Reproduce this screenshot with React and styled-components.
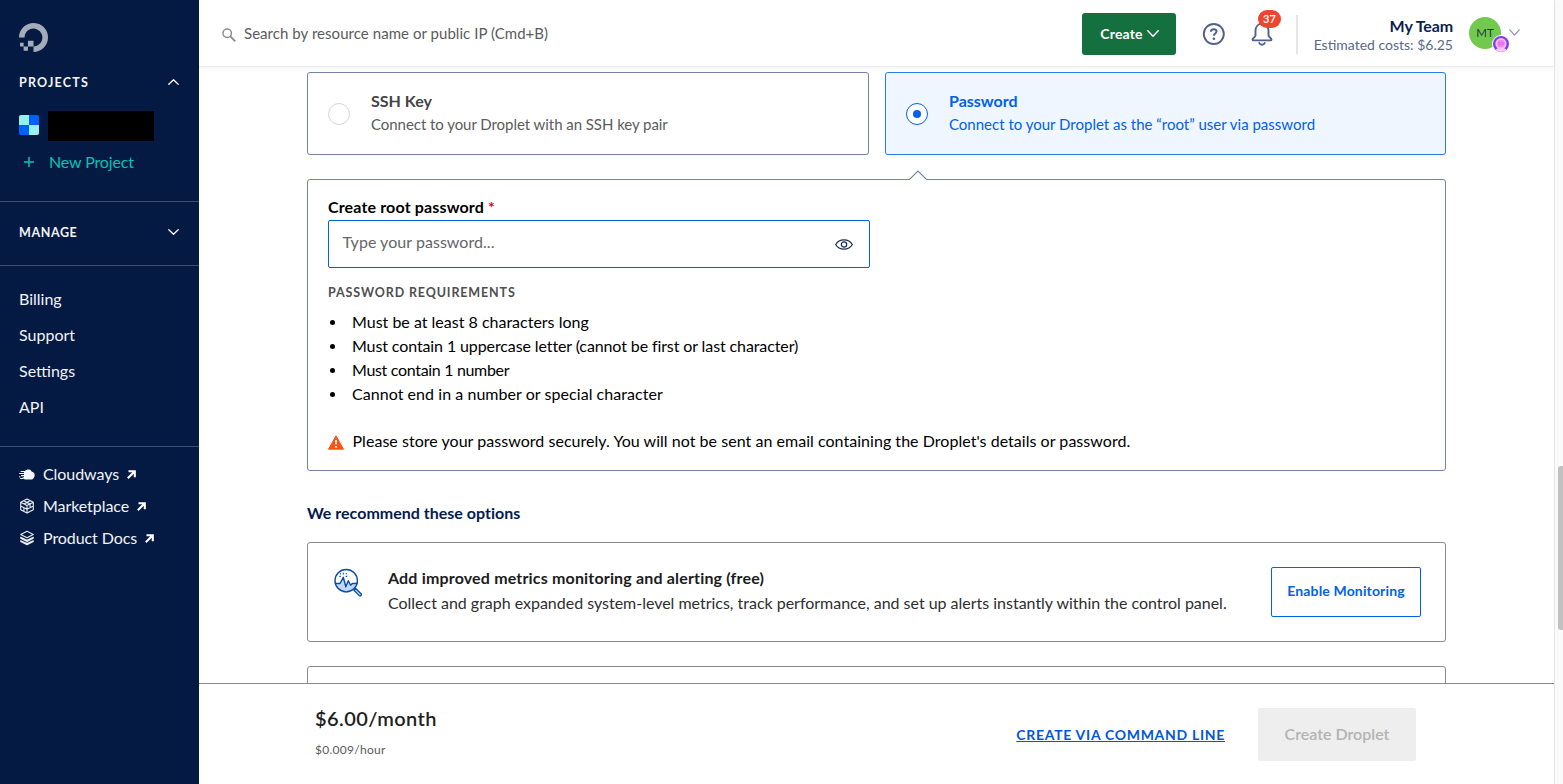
import React from 'react';
import styled, { createGlobalStyle } from 'styled-components';

const GlobalStyle = createGlobalStyle`
  *, *::before, *::after { box-sizing: border-box; }
  body {
    margin: 0;
    font-family: Lato, "Liberation Sans", sans-serif;
    font-size: 16px;
    overflow: hidden;
    background: #fff;
  }
  button { font-family: inherit; cursor: pointer; }
  svg { display: block; flex: none; }
  h1, h2, p, ul { margin: 0; padding: 0; }
  a { color: inherit; text-decoration: none; }
`;

const Shell = styled.div`
  display: flex;
  width: 100%;
  height: 784px;
  overflow: hidden;
`;

/* Sidebar */

const Sidebar = styled.nav`
  display: flex;
  flex-direction: column;
  flex: none;
  width: 199px;
  background: #051a42;
  color: #f1f3f7;
`;

const SideSection = styled.section`
  padding: ${(p) => p.$top}px 19px ${(p) => p.$bottom}px;
  border-bottom: ${(p) => (p.$last ? 'none' : '1px solid #3e4c6d')};
`;

const SectionToggle = styled.h2`
  display: flex;
  justify-content: space-between;
  align-items: center;
  padding-right: 1px;
  font-size: 12.5px;
  font-weight: 700;
  line-height: 20px;
  letter-spacing: ${(p) => p.$tracking}px;
  margin-top: ${(p) => p.$gap || 0}px;
  svg { margin-top: -2px; }
`;

const ProjectRow = styled.div`
  display: flex;
  align-items: center;
  gap: 9px;
  height: 30px;
  margin-top: 18px;
`;

const ProjectMark = styled.div`
  width: 20px;
  height: 20px;
  margin-top: -2px;
  border-radius: 2px;
  background: conic-gradient(#0061ff 25%, #97f0ea 0 50%, #0061ff 0 75%, #97f0ea 0);
`;

const ProjectName = styled.div`
  width: 106px;
  height: 30px;
  background: #000;
`;

const NewProject = styled.a`
  display: flex;
  align-items: center;
  gap: 15px;
  margin-top: 11px;
  padding-left: 5px;
  line-height: 20px;
  letter-spacing: -0.13px;
  color: #00c3b6;
`;

const SideLink = styled.a`
  display: block;
  line-height: 36px;
`;

const ExternalLink = styled.a`
  display: flex;
  align-items: center;
  line-height: 32px;
  letter-spacing: -0.07px;
  svg:first-child { margin-right: 8px; }
  svg:last-child { margin: 1px 0 0 8px; }
`;

/* Header */

const Main = styled.main`
  display: flex;
  flex-direction: column;
  flex: 1;
  min-width: 0;
`;

const Header = styled.header`
  display: flex;
  align-items: flex-start;
  flex: none;
  height: 67px;
  padding-left: 23px;
  border-bottom: 1px solid #ebebeb;
  box-shadow: 0 2px 4px rgba(0, 0, 0, 0.04);
  position: relative;
`;

const Search = styled.label`
  display: flex;
  align-items: center;
  flex: 1;
  gap: 8px;
  margin-top: 22px;
  height: 22px;
  svg { margin-top: 3px; }
`;

const SearchText = styled.span`
  font-size: 15px;
  line-height: 22px;
  letter-spacing: 0.05px;
  color: #5b5b5b;
`;

const CreateButton = styled.button`
  display: flex;
  align-items: center;
  justify-content: center;
  gap: 4px;
  width: 94px;
  height: 42px;
  margin-top: 13px;
  padding: 0 1px 1px 2px;
  border: 0;
  border-radius: 3px;
  background: #15703f;
  color: #fff;
  font-size: 14px;
  font-weight: 700;
  letter-spacing: 0.15px;
`;

const HelpIcon = styled.span`
  margin: 22px 0 0 26px;
`;

const Notifications = styled.span`
  position: relative;
  margin: 22px 0 0 25px;
`;

const Badge = styled.span`
  position: absolute;
  left: 8px;
  top: -12px;
  width: 23px;
  height: 18px;
  border-radius: 9px;
  background: #ed4630;
  color: #fff;
  font-size: 11px;
  font-weight: 600;
  line-height: 17px;
  text-align: center;
`;

const Divider = styled.span`
  width: 2px;
  height: 39px;
  margin: 15px 0 0 23px;
  background: #e6e6e6;
`;

const Team = styled.div`
  width: 155px;
  margin-top: 16px;
  text-align: right;
  white-space: nowrap;
`;

const TeamName = styled.div`
  font-weight: 700;
  line-height: 20px;
  letter-spacing: -0.1px;
  color: #0b1f4b;
`;

const TeamCost = styled.div`
  font-size: 14px;
  line-height: 18px;
  color: #5b6987;
`;

const Avatar = styled.div`
  position: relative;
  width: 32px;
  height: 32px;
  margin: 17px 8px 0 16px;
  border-radius: 50%;
  background: #71ca4e;
  color: #1b3a3c;
  font-size: 11.5px;
  line-height: 32px;
  text-align: center;
`;

const UserBadge = styled.span`
  position: absolute;
  left: 23px;
  top: 18px;
`;

const TeamChevron = styled.span`
  margin: 29px 34px 0 0;
`;

/* Content */

const Content = styled.div`
  flex: 1;
  min-height: 0;
  overflow: hidden;
  padding: 5px 108px 0;
`;

const AuthOptions = styled.div`
  display: grid;
  grid-template-columns: 562px 561px;
  gap: 16px;
`;

const AuthCard = styled.label`
  display: flex;
  height: 83px;
  padding: 17px 20px 0;
  border: 1px solid ${(p) => (p.$on ? '#2a7de9' : '#7583a8')};
  border-radius: 3px;
  background: ${(p) => (p.$on ? '#eff6ff' : '#fff')};
  color: ${(p) => (p.$on ? '#0061eb' : '#5b5b5b')};
`;

const Radio = styled.span`
  display: flex;
  align-items: center;
  justify-content: center;
  width: 22px;
  height: 22px;
  margin: 13px 21px 0 0;
  border: 1px solid ${(p) => (p.$on ? '#0061eb' : '#d6d6d6')};
  border-radius: 50%;
  background: #fff;
  &::before {
    content: '';
    width: 8px;
    height: 8px;
    border-radius: 50%;
    background: ${(p) => (p.$on ? '#0061eb' : 'transparent')};
  }
`;

const AuthTitle = styled.div`
  font-weight: 700;
  line-height: 22px;
  color: ${(p) => (p.$on ? '#0061eb' : '#444')};
`;

const AuthText = styled.div`
  font-size: 15px;
  line-height: 25px;
  letter-spacing: ${(p) => (p.$on ? 0 : -0.05)}px;
`;

const PasswordPanel = styled.section`
  position: relative;
  height: 292px;
  margin-top: 24px;
  padding: 15px 20px 0;
  border: 1px solid #7583a8;
  border-radius: 3px;
`;

const Notch = styled.span`
  position: absolute;
  left: 600px;
  top: -11px;
`;

const Label = styled.div`
  font-weight: 700;
  line-height: 24px;
  letter-spacing: 0.15px;
  color: #000;
  span { color: #c9101a; }
`;

const PasswordField = styled.div`
  display: flex;
  align-items: center;
  justify-content: space-between;
  width: 542px;
  height: 48px;
  margin-top: 1px;
  padding: 0 16px 0 13.5px;
  border: 1px solid #0061eb;
  border-radius: 2px;
  color: #666;
  span { margin-top: -6px; letter-spacing: 0.04px; }
`;

const RequirementsTitle = styled.div`
  margin-top: 15px;
  font-size: 12.5px;
  font-weight: 700;
  line-height: 20px;
  letter-spacing: 0.87px;
  color: #4f4f4f;
`;

const Requirements = styled.ul`
  margin-top: 7px;
  list-style: none;
`;

const Requirement = styled.li`
  display: flex;
  align-items: center;
  line-height: 24px;
  letter-spacing: ${(p) => p.$tracking || 0}px;
  color: #000;
  &::before {
    content: '';
    width: 5px;
    height: 5px;
    margin: 0 17px 0 2px;
    border-radius: 50%;
    background: #000;
  }
`;

const Warning = styled.p`
  display: flex;
  align-items: center;
  gap: 8.5px;
  margin-top: 23px !important;
  line-height: 24px;
  letter-spacing: 0.035px;
  white-space: nowrap;
  color: #000;
  svg { margin-top: 3px; }
`;

const SectionHeading = styled.h2`
  margin-top: 30px;
  font-size: 16px;
  font-weight: 700;
  line-height: 24px;
  letter-spacing: 0.01px;
  color: #031b4e;
`;

const OptionCard = styled.section`
  display: flex;
  align-items: flex-start;
  height: 100px;
  margin-top: ${(p) => p.$gap}px;
  padding: 24px 24px 0 26px;
  border: 1px solid #8a8a8a;
  border-radius: 3px;
  svg { margin-top: 1px; }
`;

const OptionBody = styled.div`
  flex: 1;
  margin: -1px 0 0 26px;
  white-space: nowrap;
`;

const OptionTitle = styled.div`
  line-height: 24px;
  font-weight: 700;
  letter-spacing: 0.17px;
  color: #1c1c1c;
`;

const OptionText = styled.div`
  line-height: 26px;
  letter-spacing: -0.015px;
  color: #2e2e2e;
`;

const OutlineButton = styled.button`
  width: 150px;
  height: 50px;
  padding: 0 0 3px;
  border: 1px solid #0061eb;
  border-radius: 2px;
  background: #fff;
  color: #0061eb;
  font-size: 14px;
  font-weight: 700;
  letter-spacing: 0.15px;
`;

/* Footer */

const Footer = styled.footer`
  display: flex;
  align-items: flex-start;
  flex: none;
  height: 101px;
  padding: 0 138px 0 116px;
  border-top: 1px solid #8a8a8a;
  background: #fff;
`;

const Price = styled.div`
  flex: 1;
  padding-top: 20px;
`;

const Monthly = styled.div`
  font-size: 20px;
  font-weight: 600;
  line-height: 29px;
  letter-spacing: 0.4px;
  color: #1f1f1f;
`;

const Hourly = styled.div`
  margin-top: 9px;
  font-size: 12px;
  line-height: 16px;
  letter-spacing: 0.27px;
  color: #5b5b5b;
`;

const CommandLink = styled.a`
  margin: 41px 33px 0 0;
  font-size: 14px;
  font-weight: 700;
  line-height: 20px;
  letter-spacing: 0.7px;
  color: #0057dc;
  text-decoration: underline;
  text-decoration-thickness: 1px;
  text-underline-offset: 1px;
  text-decoration-skip-ink: none;
`;

const SubmitButton = styled.button`
  width: 158px;
  height: 53px;
  margin-top: 24px;
  padding: 0 0 2px;
  border: 0;
  border-radius: 2px;
  background: #eee;
  color: #b3b3b3;
  font-size: 16px;
  font-weight: 600;
`;

const ScrollTrack = styled.div`
  flex: none;
  width: 9px;
  padding: 466px 0 0 3px;
  border-left: 1px solid #e6e6e6;
  background: #fafafa;
`;

const ScrollThumb = styled.div`
  height: 164px;
  border-radius: 3px 0 0 3px;
  background: #c1c1c1;
`;

const Chevron = ({ width, height, color, stroke = 1.3, up }) => (
  <svg width={width} height={height} viewBox={`0 0 ${width} ${height}`} fill="none" stroke={color} strokeWidth={stroke} strokeLinecap="round" strokeLinejoin="round">
    <path d={up
      ? `M.8 ${height - 0.8} L${width / 2} .8 L${width - 0.8} ${height - 0.8}`
      : `M.8 .8 L${width / 2} ${height - 0.8} L${width - 0.8} .8`} />
  </svg>
);

const Logo = () => (
  <svg width="29" height="29" viewBox="0 0 24 24" fill="#a4abbb">
    <path d="M12.04 0C5.408-.02.005 5.37.005 11.992h4.638c0-4.923 4.882-8.731 10.064-6.855a6.95 6.95 0 014.147 4.148c1.889 5.177-1.924 10.055-6.84 10.064v-4.61H7.391v4.623h4.61V24c7.86 0 13.967-7.588 11.397-15.83-1.115-3.59-3.985-6.446-7.575-7.575A12.8 12.8 0 0012.039 0zM7.39 19.362H3.828v3.564H7.39zm-3.563 0v-2.978H.85v2.978z" />
  </svg>
);

const ArrowOut = () => (
  <svg width="9" height="9" viewBox="0 0 9 9" fill="none" stroke="#fff" strokeWidth="2.1">
    <path d="M1.500 1.200H7.800V7.200M7.500 1.500L.8 8.200" />
  </svg>
);

const CloudIcon = () => (
  <svg width="16" height="11" viewBox="0 0 16 11" fill="#f4f6fa">
    <path d="M6.1 1.9C7 .7 8.700 .2 10.100 .5c1.300.3 2.300 1.200 2.700 2.300 1.600.2 2.900 1.500 2.900 3.200S14.300 10.500 12.500 10.500H6.400C4.800 10.500 3.700 9.400 3.500 8.200H5V7.200H2V6.100H5V5H.2V3.900H5V2.900H1.600V1.900z" />
    <path d="M1.200 9.100H4V10.100H1.200zM0 7.300H1.300V8.200H0z" />
  </svg>
);

const CubeIcon = () => (
  <svg width="16" height="16" viewBox="0 0 16 16" fill="none" stroke="#e9ecf3" strokeWidth="1.1" strokeLinejoin="round">
    <path d="M8 1L14.300 4.300V11.700L8 15L1.700 11.700V4.300zM1.700 4.300L8 7.600L14.300 4.300M8 7.600V15M4.800 2.700L11.100 6V9.700M11.200 2.700L4.900 6M1.700 8L8 11.300L14.300 8M4.900 9.700V13.300" />
  </svg>
);

const LayersIcon = () => (
  <svg width="16" height="16" viewBox="0 0 16 16" fill="none" stroke="#e9ecf3" strokeWidth="1.1" strokeLinejoin="round">
    <path d="M8 1.300L14.300 4.500L8 7.700L1.700 4.500zM1.700 7.200V8.300L8 11.400L14.300 8.300V7.200L8 10.200zM1.700 10.700V11.600L8 14.700L14.300 11.600V10.700L8 13.600z" />
  </svg>
);

const BellIcon = () => (
  <svg width="23" height="24" viewBox="-1 0 23 24" fill="none" stroke="#52618a" strokeWidth="1.9" strokeLinejoin="round" strokeLinecap="round">
    <path d="M11 1.800C7 1.800 4.500 4.800 4.500 8.700V13.500C4.500 15.200 1.500 15.700 1.500 17.500C1.500 18.100 2 18.400 2.500 18.400H19.500C20 18.400 20.500 18.100 20.500 17.500C20.500 15.700 17.500 15.200 17.500 13.500V8.700C17.500 4.800 15 1.800 11 1.800z" />
    <path d="M8.300 21C8.800 22.200 9.800 22.700 11 22.700S13.200 22.200 13.700 21" />
  </svg>
);

const HelpCircle = () => (
  <svg width="23" height="24" viewBox="0 0 23 24" fill="none" stroke="#52618a" strokeWidth="1.9">
    <circle cx="11.8" cy="12" r="10" />
    <path d="M8.900 9.800C8.900 8.200 10.100 7.200 11.700 7.200S14.500 8.200 14.500 9.600C14.500 11.500 11.900 11.600 11.900 13.800" strokeWidth="2" />
    <circle cx="11.9" cy="16.7" r="1.3" fill="#52618a" stroke="none" />
  </svg>
);

const UserGlyph = () => (
  <svg width="18" height="18" viewBox="0 0 18 18">
    <circle cx="9" cy="9" r="9" fill="#fff" />
    <circle cx="9" cy="9" r="8" fill="#7a3ff5" />
    <path d="M3.600 14.900C4.500 13.500 6.400 12.500 9 12.500S13.500 13.500 14.400 14.900A8 8 0 013.600 14.900z" fill="#fbc9fa" />
    <circle cx="9" cy="8.7" r="5.6" fill="#f9bdf8" />
    <circle cx="9" cy="8.6" r="3.9" fill="#f387ef" />
    <path d="M6.800 7.600H11.200V9.600H6.800z" fill="none" stroke="#d765dd" strokeWidth=".7" />
  </svg>
);

const MonitorIcon = () => (
  <svg width="28" height="29" viewBox="0 0 28 29" fill="none" stroke="#0b4ba6" strokeWidth="1.4" strokeLinejoin="round" strokeLinecap="round">
    <path d="M1 15.500H5.500L9.500 10L12 18.500L14.500 13.500L17 17L19 15H23.200A11.200 11.200 0 011 15.500z" fill="#c1d8fb" stroke="none" />
    <circle cx="12.2" cy="12.7" r="11.2" />
    <path d="M1.500 15.500H6L9.300 9.300L11.800 18.700L14.300 12.800L16.600 17.200L18.300 15.500H23" />
    <path d="M9.300 5V6M5.800 8.400H6.300M12.200 8.400H12.800M6.400 5.700L6.600 5.900M12.300 5.600L12.100 5.800" strokeWidth="1.1" />
    <path d="M20 22.300L21.800 20.500L27 25.800A1.250 1.250 0 0125.200 27.600z" fill="#c1d8fb" strokeWidth="1.3" />
  </svg>
);

const links = ['Billing', 'Support', 'Settings', 'API'];
const products = [
  { name: 'Cloudways', Icon: CloudIcon },
  { name: 'Marketplace', Icon: CubeIcon },
  { name: 'Product Docs', Icon: LayersIcon },
];
const rules = [
  { text: 'Must be at least 8 characters long' },
  { text: 'Must contain 1 uppercase letter (cannot be first or last character)', tracking: -0.11 },
  { text: 'Must contain 1 number', tracking: -0.32 },
  { text: 'Cannot end in a number or special character', tracking: 0.05 },
];

export default function App() {
  return (
    <>
      <GlobalStyle />
      <Shell>
        <Sidebar>
          <SideSection $top={23} $bottom={29}>
            <Logo />
            <SectionToggle $gap={21} $tracking={1.2}>
              PROJECTS
              <Chevron up width={11} height={6} color="#fff" />
            </SectionToggle>
            <ProjectRow>
              <ProjectMark />
              <ProjectName />
            </ProjectRow>
            <NewProject>
              <svg width="10" height="10" viewBox="0 0 10 10" stroke="#00c3b6" strokeWidth="1.5">
                <path d="M5 0V10M0 5H10" />
              </svg>
              New Project
            </NewProject>
          </SideSection>
          <SideSection $top={21} $bottom={22}>
            <SectionToggle $tracking={0.6}>
              MANAGE
              <Chevron width={11} height={6} color="#fff" />
            </SectionToggle>
          </SideSection>
          <SideSection $top={15} $bottom={21}>
            {links.map((name) => <SideLink key={name}>{name}</SideLink>)}
          </SideSection>
          <SideSection $top={11} $bottom={0} $last>
            {products.map(({ name, Icon }) => (
              <ExternalLink key={name}>
                <Icon />
                {name}
                <ArrowOut />
              </ExternalLink>
            ))}
          </SideSection>
        </Sidebar>

        <Main>
          <Header>
            <Search>
              <svg width="14" height="14" viewBox="0 0 14 14" fill="none" stroke="#8c8c8c" strokeWidth="1.5">
                <circle cx="5.2" cy="5.2" r="4.2" />
                <path d="M8.300 8.300L13.300 13.300" strokeWidth="1.9" />
              </svg>
              <SearchText>Search by resource name or public IP (Cmd+B)</SearchText>
            </Search>
            <CreateButton>
              Create
              <Chevron width={12} height={7} color="#fff" stroke={1.5} />
            </CreateButton>
            <HelpIcon><HelpCircle /></HelpIcon>
            <Notifications>
              <BellIcon />
              <Badge>37</Badge>
            </Notifications>
            <Divider />
            <Team>
              <TeamName>My Team</TeamName>
              <TeamCost>Estimated costs: $6.25</TeamCost>
            </Team>
            <Avatar>
              MT
              <UserBadge><UserGlyph /></UserBadge>
            </Avatar>
            <TeamChevron><Chevron width={11} height={7} color="#8590ad" stroke={1.2} /></TeamChevron>
          </Header>

          <Content>
            <AuthOptions>
              <AuthCard>
                <Radio />
                <div>
                  <AuthTitle>SSH Key</AuthTitle>
                  <AuthText>Connect to your Droplet with an SSH key pair</AuthText>
                </div>
              </AuthCard>
              <AuthCard $on>
                <Radio $on />
                <div>
                  <AuthTitle $on>Password</AuthTitle>
                  <AuthText $on>Connect to your Droplet as the “root” user via password</AuthText>
                </div>
              </AuthCard>
            </AuthOptions>

            <PasswordPanel>
              <Notch>
                <svg width="20" height="12" viewBox="0 0 20 12">
                  <path d="M1.500 10.500L10 2L18.500 10.500V12H1.500z" fill="#fff" />
                  <path d="M0 10.500H1.500L10 2L18.500 10.500H20" fill="none" stroke="#7583a8" strokeWidth="1.1" />
                </svg>
              </Notch>
              <Label>Create root password <span>*</span></Label>
              <PasswordField>
                <span>Type your password...</span>
                <svg width="18" height="11" viewBox="0 0 18 11" fill="none" stroke="#1c2b55" strokeWidth="1.2">
                  <path d="M.7 5.500C2.500 2.300 5.500 .8 9 .8S15.500 2.300 17.300 5.500C15.500 8.700 12.500 10.200 9 10.200S2.500 8.700 .7 5.500z" />
                  <circle cx="9" cy="5.5" r="2.7" />
                </svg>
              </PasswordField>
              <RequirementsTitle>PASSWORD REQUIREMENTS</RequirementsTitle>
              <Requirements>
                {rules.map((r) => <Requirement key={r.text} $tracking={r.tracking}>{r.text}</Requirement>)}
              </Requirements>
              <Warning>
                <svg width="16" height="15" viewBox="0 0 16 15">
                  <path d="M8 .8L15.500 14.200H.5z" fill="#f75416" stroke="#f75416" strokeLinejoin="round" />
                  <path d="M8 5V9.200M8 11V12.700" stroke="#fff" strokeWidth="1.7" />
                </svg>
                Please store your password securely. You will not be sent an email containing the Droplet's details or password.
              </Warning>
            </PasswordPanel>

            <SectionHeading>We recommend these options</SectionHeading>
            <OptionCard $gap={17}>
              <MonitorIcon />
              <OptionBody>
                <OptionTitle>Add improved metrics monitoring and alerting (free)</OptionTitle>
                <OptionText>
                  Collect and graph expanded system-level metrics, track performance, and set up alerts instantly within the control panel.
                </OptionText>
              </OptionBody>
              <OutlineButton>Enable Monitoring</OutlineButton>
            </OptionCard>
            <OptionCard $gap={24} />
          </Content>

          <Footer>
            <Price>
              <Monthly>$6.00/month</Monthly>
              <Hourly>$0.009/hour</Hourly>
            </Price>
            <CommandLink>CREATE VIA COMMAND LINE</CommandLink>
            <SubmitButton>Create Droplet</SubmitButton>
          </Footer>
        </Main>

        <ScrollTrack>
          <ScrollThumb />
        </ScrollTrack>
      </Shell>
    </>
  );
}
